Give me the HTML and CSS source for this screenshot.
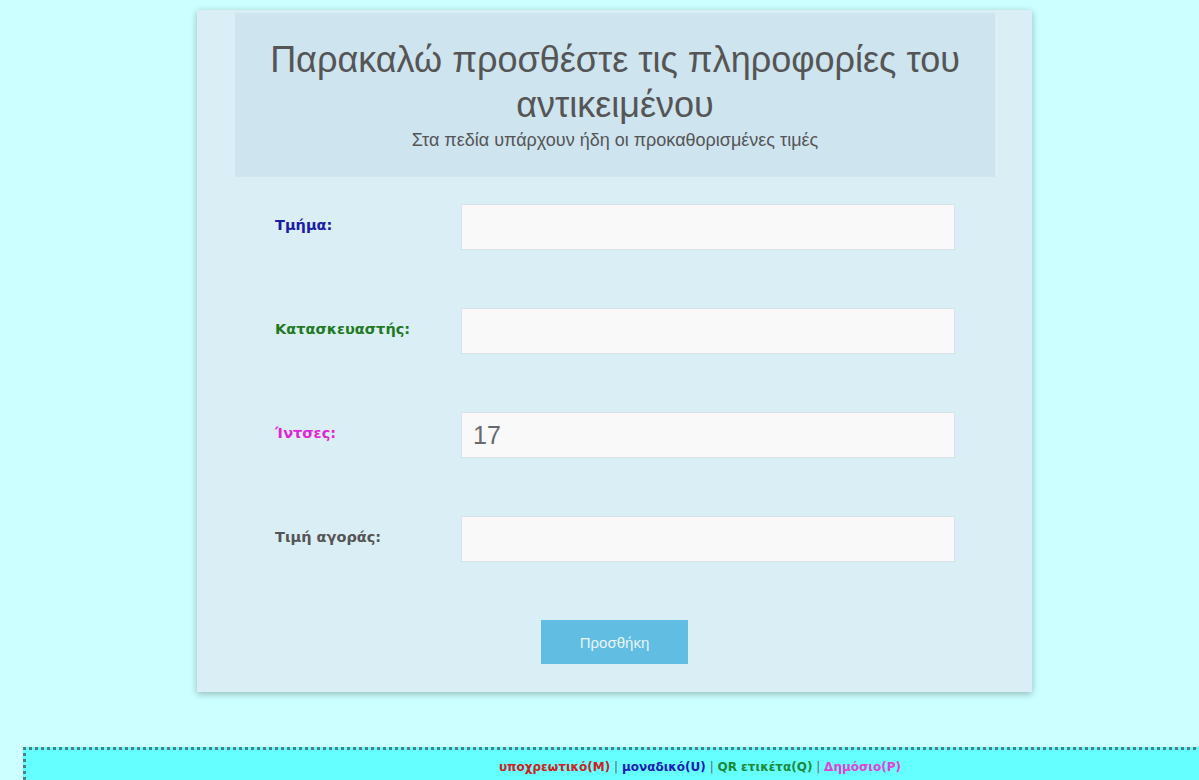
FILE: index.html
```html
<!DOCTYPE html>
<html lang="el">
<head>
<meta charset="utf-8">
<title>Προσθήκη αντικειμένου</title>
<link rel="stylesheet" href="styles.css">
</head>
<body>
<main class="card">
  <header class="card-head">
    <h1 class="title">Παρακαλώ προσθέστε τις πληροφορίες του αντικειμένου</h1>
    <p class="subtitle">Στα πεδία υπάρχουν ήδη οι προκαθορισμένες τιμές</p>
  </header>
  <form class="form">
    <div class="row">
      <label class="label label-blue" for="f1">Τμήμα:</label>
      <input class="field" id="f1" type="text">
    </div>
    <div class="row">
      <label class="label label-green" for="f2">Κατασκευαστής:</label>
      <input class="field" id="f2" type="text">
    </div>
    <div class="row">
      <label class="label label-pink" for="f3">Ίντσες:</label>
      <input class="field" id="f3" type="text" value="17">
    </div>
    <div class="row">
      <label class="label label-gray" for="f4">Τιμή αγοράς:</label>
      <input class="field" id="f4" type="text">
    </div>
    <div class="actions">
      <button class="btn" type="button">Προσθήκη</button>
    </div>
  </form>
</main>
<footer class="legend">
  <span class="k-red">υποχρεωτικό(M)</span><span class="sep"> | </span><span class="k-blue">μοναδικό(U)</span><span class="sep"> | </span><span class="k-green">QR ετικέτα(Q)</span><span class="sep"> | </span><span class="k-pink">Δημόσιο(P)</span>
</footer>
</body>
</html>
```
FILE: styles.css
```css
html {
  overflow-x: hidden;
}

body {
  margin: 0;
  padding: 10px 0 0;
  background: #ccffff;
  font-family: "Liberation Sans", Arial, sans-serif;
  color: #555;
}

.card {
  width: 835px;
  margin-left: 197px;
  padding: 3px 0 28px;
  box-sizing: border-box;
  background: #daeef6;
  box-shadow: 0 2px 7px rgba(0, 0, 0, 0.28);
}

.card-head {
  margin: 0 37px 0 38px;
  height: 164px;
  box-sizing: border-box;
  padding-top: 24px;
  background: #cee4ef;
  text-align: center;
}

.title {
  margin: 0 auto;
  width: 740px;
  font-size: 36px;
  font-weight: normal;
  line-height: 45px;
  color: #555;
}

.subtitle {
  margin: 0;
  padding-top: 2px;
  font-size: 18px;
  line-height: 22px;
  color: #555;
}

.form {
  padding: 27px 77px 0 78px;
  display: flex;
  flex-direction: column;
  gap: 58px;
}

.row {
  display: grid;
  grid-template-columns: 186px 1fr;
  align-items: center;
}

.label {
  font-family: "DejaVu Sans", Verdana, sans-serif;
  font-weight: bold;
  font-size: 14.5px;
  margin-top: -4px;
}

.label-blue { color: #1c1ca4; }
.label-green { color: #1f7a1f; }
.label-pink { color: #e024d6; }
.label-gray { color: #555; }

.field {
  height: 46px;
  box-sizing: border-box;
  border: 1px solid #d5e2e8;
  background: #f9f9f9;
  padding: 0 11px;
  font-family: "Liberation Sans", Arial, sans-serif;
  font-size: 25px;
  color: #6a6a6a;
}

.actions {
  display: flex;
  justify-content: center;
  padding-right: 1px;
}

.btn {
  width: 147px;
  height: 44px;
  border: 0;
  background: #62bde2;
  color: #eaf6fb;
  font-family: "Liberation Sans", Arial, sans-serif;
  font-size: 15px;
}

.legend {
  margin: 55px -15px 0 23px;
  padding: 7px 0 6px 160px;
  border: 3px dotted #4a7f84;
  border-right: 0;
  background: #66ffff;
  text-align: center;
  font-family: "DejaVu Sans", Verdana, sans-serif;
  font-weight: bold;
  font-size: 12px;
  line-height: 20px;
}

.k-red { color: #cc2222; }
.k-blue { color: #1a1ab4; }
.k-green { color: #1a8a3a; }
.k-pink { color: #e040e0; }
.sep { color: #666; font-weight: normal; }
```
